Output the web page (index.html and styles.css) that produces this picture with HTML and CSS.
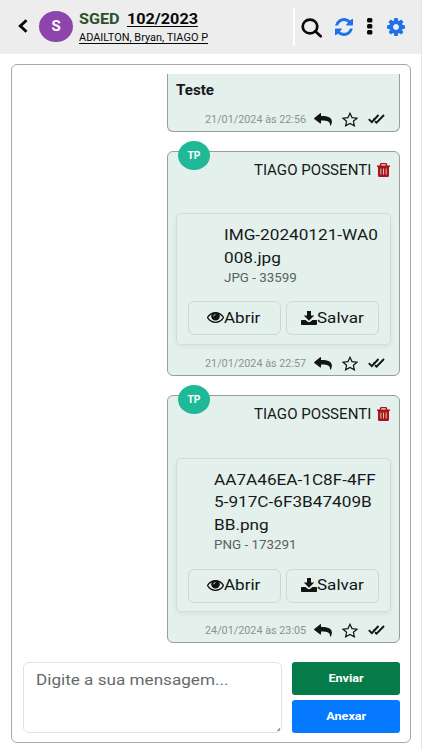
FILE: index.html
```html
<!DOCTYPE html>
<html lang="pt-BR">
<head>
<meta charset="utf-8">
<title>SGED 102/2023</title>
<link rel="stylesheet" href="styles.css">
</head>
<body>
<svg class="defs" aria-hidden="true">
  <symbol id="refresh" viewBox="128 128 1536 1536"><path d="M1639 1056q0 5-1 7-64 268-268 434.500t-478 166.500q-146 0-282.500-55t-243.500-157l-129 129q-19 19-45 19t-45-19-19-45v-448q0-26 19-45t45-19h448q26 0 45 19t19 45-19 45l-137 137q71 66 161 102t187 36q134 0 250-65t186-179q11-17 53-117 8-23 30-23h192q13 0 22.500 9.500t9.500 22.500zm25-800v448q0 26-19 45t-45 19h-448q-26 0-45-19t-19-45 19-45l138-138q-148-137-349-137-134 0-250 65t-186 179q-11 17-53 117-8 23-30 23h-199q-13 0-22.500-9.500t-9.500-22.500v-7q65-268 270-434.500t480-166.500q146 0 284 55.500t245 156.500l130-129q19-19 45-19t45 19 19 45z"/></symbol>
  <symbol id="cog" viewBox="128 128 1536 1536"><path d="M1152 896q0-106-75-181t-181-75-181 75-75 181 75 181 181 75 181-75 75-181zm512-109v222q0 12-8 23t-20 13l-185 28q-19 54-39 91 35 50 107 138 10 12 10 25t-9 23q-27 37-99 108t-94 71q-12 0-26-9l-138-108q-44 23-91 38-16 136-29 186-7 28-36 28h-222q-14 0-24.500-8.500t-11.500-21.500l-28-184q-49-16-90-37l-141 107q-10 9-25 9-14 0-25-11-126-114-165-168-7-10-7-23 0-12 8-23 15-21 51-66.500t54-70.500q-27-50-41-99l-183-27q-13-2-21-12.500t-8-23.500v-222q0-12 8-23t19-13l186-28q14-46 39-92-40-57-107-138-10-12-10-24 0-10 9-23 26-36 98.500-107.500t94.500-71.500q13 0 26 10l138 107q44-23 91-38 16-136 29-186 7-28 36-28h222q14 0 24.500 8.500t11.500 21.500l28 184q49 16 90 37l142-107q9-9 24-9 13 0 25 10 129 119 165 170 7 8 7 22 0 12-8 23-15 21-51 66.500t-54 70.500q26 50 41 98l183 28q13 2 21 12.500t8 23.500z"/></symbol>
  <symbol id="eye" viewBox="0 384 1792 1152"><path d="M1664 960q-152-236-381-353 61 104 61 225 0 185-131.500 316.500t-316.500 131.500-316.500-131.500-131.500-316.500q0-121 61-225-229 117-381 353 133 205 333.500 326.500t434.500 121.500 434.500-121.500 333.500-326.500zm-720-384q0-20-14-34t-34-14q-125 0-214.500 89.500t-89.500 214.500q0 20 14 34t34 14 34-14 14-34q0-86 61-147t147-61q20 0 34-14t14-34zm848 384q0 34-20 69-140 230-376.500 368.500t-499.500 138.500-499.500-139-376.500-368q-20-35-20-69t20-69q140-229 376.500-368t499.500-139 499.500 139 376.500 368q20 35 20 69z"/><circle cx="896" cy="832" r="400"/><path class="glint" d="M700 830Q720 660 890 640"/></symbol>
  <symbol id="download" viewBox="0 0 16 14"><path d="M6 0h4v4.500h3.200L8 9.700 2.800 4.500H6zM.8 9H4.500L6.300 10.600Q8 11.700 9.700 10.600L11.500 9H15.200Q16 9 16 9.800V13.200Q16 14 15.200 14H.8Q0 14 0 13.200V9.800Q0 9 .8 9z"/></symbol>
  <symbol id="reply" viewBox="0 0 18 13"><path d="M.3 4.900 6.200.2Q6.900-.2 7 .7V2.900C13.500 2.800 18 4 17.900 8.700 17.800 10.700 16.900 12.500 16.400 12.700 15.900 12.900 16 12.400 16 11.800 16.100 8.500 13.500 7.500 7 7.600V10Q6.900 10.900 6.200 10.400L.3 5.900Q-.2 5.400.3 4.900z"/></symbol>
  <symbol id="star" viewBox="0 0 16 15"><path class="line" d="M8 1.300 10 5.600 15 6.200 11.400 9.300 12.400 13.800 8 11.500 3.600 13.800 4.600 9.300 1 6.200 6 5.600z"/></symbol>
  <symbol id="checks" viewBox="0 0 17 12"><path class="tick" d="M.8 6.200 3.800 9.200 10.500 2M5.500 5.500 6.300 6.300M7 8.300 8.500 9.600 16 2"/></symbol>
  <symbol id="trash" viewBox="0 0 13 14"><path fill-rule="evenodd" d="M4 0h5q.7 0 1 1l.4 1.500H13v1.600h-1V12.500q0 1.500-1.500 1.500h-8Q1 14 1 12.500V4.100H0V2.500H2.600L3 1Q3.300 0 4 0zM4.500 1.200 4.200 2.500H8.800L8.500 1.200zM3.500 5.500v6h.8V5.500zM6.100 5.500v6h.8V5.500zM8.700 5.500v6h.8V5.500z"/></symbol>
</svg>
<header class="topbar">
  <svg class="back" viewBox="0 0 10 14"><path d="M8.500 1.300 2.300 7 8.500 12.700"/></svg>
  <div class="avatar">S</div>
  <div class="heading">
    <div class="title"><span class="brand">SGED</span><span class="number">102/2023</span></div>
    <div class="members"><span>ADAILTON, Bryan, TIAGO PO</span></div>
  </div>
  <nav class="actions">
    <svg class="search" viewBox="0 0 22 20"><ellipse cx="9" cy="8.500" rx="7.300" ry="6.900"/><path d="M14.300 13.300 19.700 18.200"/></svg>
    <svg class="refresh"><use href="#refresh"/></svg>
    <svg class="dots" viewBox="0 0 6 18"><rect width="5.400" height="4.600" rx="1.500"/><rect y="6" width="5.400" height="4.600" rx="1.500"/><rect y="12" width="5.400" height="4.600" rx="1.500"/></svg>
    <svg class="cog"><use href="#cog"/></svg>
  </nav>
</header>
<main class="chat">
  <section class="messages">
    <article class="message first">
      <p class="text">Teste</p>
      <footer><time>21/01/2024 às 22:56</time><svg class="reply"><use href="#reply"/></svg><svg class="star"><use href="#star"/></svg><svg class="checks"><use href="#checks"/></svg></footer>
    </article>
    <article class="message second">
      <span class="badge">TP</span>
      <div class="author"><span>TIAGO POSSENTI</span><svg class="trash"><use href="#trash"/></svg></div>
      <div class="file jpg">
        <div class="info"><div class="name">IMG-20240121-WA0<br>008.jpg</div><div class="meta">JPG - 33599</div></div>
        <div class="buttons">
          <button><svg class="eye"><use href="#eye"/></svg><span class="open">Abrir</span></button>
          <button><svg class="download"><use href="#download"/></svg><span class="save">Salvar</span></button>
        </div>
      </div>
      <footer><time>21/01/2024 às 22:57</time><svg class="reply"><use href="#reply"/></svg><svg class="star"><use href="#star"/></svg><svg class="checks"><use href="#checks"/></svg></footer>
    </article>
    <article class="message third">
      <span class="badge">TP</span>
      <div class="author"><span>TIAGO POSSENTI</span><svg class="trash"><use href="#trash"/></svg></div>
      <div class="file png">
        <div class="info"><div class="name">AA7A46EA-1C8F-4FF<br>5-917C-6F3B47409B<br>BB.png</div><div class="meta">PNG - 173291</div></div>
        <div class="buttons">
          <button><svg class="eye"><use href="#eye"/></svg><span class="open">Abrir</span></button>
          <button><svg class="download"><use href="#download"/></svg><span class="save">Salvar</span></button>
        </div>
      </div>
      <footer><time>24/01/2024 às 23:05</time><svg class="reply"><use href="#reply"/></svg><svg class="star"><use href="#star"/></svg><svg class="checks"><use href="#checks"/></svg></footer>
    </article>
  </section>
  <form class="composer">
    <div class="field"><span>Digite a sua mensagem...</span></div>
    <div class="send-buttons">
      <button type="button" class="send"><span>Enviar</span></button>
      <button type="button" class="attach"><span>Anexar</span></button>
    </div>
  </form>
</main>
</body>
</html>
```
FILE: styles.css
```css
* { box-sizing: border-box; }
body {
  margin: 0;
  height: 750px;
  overflow: hidden;
  background: #fff;
  border-right: 1px solid #e4e4e4;
  font-family: Roboto, "Liberation Sans", sans-serif;
  color: #161918;
}
svg { display: block; flex: none; fill: currentColor; }
.defs { position: absolute; width: 0; height: 0; }
button { font-family: inherit; padding: 0; margin: 0; }

.topbar {
  display: flex;
  height: 54px;
  background: #ededed;
  color: #080808;
}
.back { width: 10px; height: 14px; margin: 19px 0 0 18px; fill: none; stroke: #080808; stroke-width: 2.900; }
.avatar {
  width: 34px; height: 31px;
  margin: 11px 0 0 11px;
  border-radius: 50%;
  background: #8e44ad;
  color: #fff;
  font-weight: 700; font-size: 15px; line-height: 30px;
  text-align: center;
}
.heading { width: 129px; margin: 11px 0 0 6px; overflow: hidden; }
.title { display: flex; height: 18px; font-weight: 700; font-size: 14.500px; line-height: 18px; }
.title span { display: block; transform-origin: left; transform: scaleX(1.115); }
.brand { width: 48px; color: #2a5129; }
.number { text-decoration: underline; text-decoration-thickness: 1px; text-underline-offset: 2px; }
.members { height: 18px; margin-top: 1px; font-size: 10px; line-height: 16px; white-space: nowrap; overflow: hidden; }
.members span { display: inline-block; transform-origin: left; transform: scaleX(1.095); text-decoration: underline; text-underline-offset: 1.500px; }
.actions {
  display: flex;
  width: 127px; height: 38px;
  margin: 8px 0 0 85px;
  border-left: 2px solid #fff;
}
.search { width: 22px; height: 20px; margin: 10px 0 0 6px; fill: none; stroke: #080808; stroke-width: 2.700; stroke-linecap: round; }
.refresh { width: 20px; height: 18px; margin: 10px 0 0 11px; color: #1c72e8; }
.dots { width: 6px; height: 18px; margin: 10px 0 0 13px; }
.cog { width: 20px; height: 18px; margin: 10px 0 0 13px; color: #1c72e8; }

.chat {
  width: 400px; height: 679px;
  margin: 10px 0 0 11px;
  padding: 9px 11px;
  border: 1px solid #a7a9a9;
  border-radius: 6px;
}
.messages { display: flex; flex-direction: column; align-items: flex-end; height: 588px; }
.message {
  position: relative;
  flex: none;
  display: flex;
  flex-direction: column;
  width: 233px;
  margin-right: -1px;
  padding: 0 8px;
  background: #e4f0ec;
  border: 1px solid #979e9c;
  border-radius: 6px;
}
.first { height: 58px; border-top: 0; border-radius: 0 0 6px 6px; }
.second { height: 225px; margin-top: 19px; }
.third { height: 248px; margin-top: 19px; }
.text { width: 60px; margin: 7px 0 0; font-weight: 700; font-size: 13.800px; line-height: 18px; transform-origin: left; transform: scaleX(1.1); }
.badge {
  position: absolute;
  left: 10px; top: -11px;
  width: 32px; height: 29px;
  border-radius: 50%;
  background: #1fb998;
  color: #fff;
  font-weight: 700; font-size: 10.300px; line-height: 29px;
  text-align: center;
}
.author { display: flex; justify-content: flex-end; gap: 6px; margin: 8px 1px 0 0; font-size: 14.300px; line-height: 20px; }
.author span { transform-origin: right; transform: scaleX(1.055); }
.trash { width: 13px; height: 14px; margin-top: 3px; color: #aa1417; }
.file {
  width: 215px; height: 132px;
  margin-top: 33px;
  border: 1px solid #d1dcd8;
  border-radius: 5px;
  box-shadow: 0 2px 4px #80999026;
}
.file.png { height: 154px; margin-top: 34px; }
.info { padding: 10px 0 0 47px; }
.png .info { padding: 9.500px 0 0 37px; }
.name { font-size: 15.500px; line-height: 22.500px; white-space: nowrap; transform-origin: left; transform: scaleX(1.108); width: 150px; }
.meta { font-size: 12px; line-height: 19px; color: #596361; transform-origin: left; transform: scaleX(1.115); width: 100px; }
.buttons { display: flex; gap: 5px; margin: 13px 0 0 11px; }
.png .buttons { margin-top: 13.500px; }
.buttons button {
  display: flex; align-items: center; justify-content: center;
  width: 93px; height: 34px;
  background: transparent;
  border: 1px solid #ccd8d3;
  border-radius: 6px;
  color: #101413;
  font-size: 15.500px;
}
.buttons button > * { position: relative; top: -.5px; left: -.5px; }
.buttons span { display: block; text-align: left; transform-origin: left; transform: scaleX(1.1); }
.open { width: 37px; }
.save { width: 47px; }
.eye { width: 17px; height: 11px; }
.glint { fill: none; stroke: #e4efeb; stroke-width: 90; }
.download { width: 16px; height: 14px; }
.message footer { display: flex; height: 24px; margin-top: auto; padding-left: 29px; color: #101413; }
time { width: 101px; font-size: 10.200px; line-height: 25px; color: #8a9490; white-space: nowrap; transform-origin: left; transform: scaleX(1.06); }
.reply { width: 18px; height: 13px; margin: 6px 0 0 7.500px; }
.star { width: 16px; height: 15px; margin: 5px 0 0 10.500px; }
.checks { width: 17px; height: 12px; margin: 6px 0 0 9.500px; }
.line { fill: none; stroke: #101413; stroke-width: 1.200; }
.tick { fill: none; stroke: #101413; stroke-width: 1.900; }

.composer { display: flex; gap: 10.500px; }
.field {
  width: 260px; height: 71px;
  padding: 7px 12.500px;
  margin-left: -.5px;
  border: 1px solid #e2e2e2;
  border-radius: 6px;
  color: #656a6c;
  font-size: 15.500px; line-height: 20px;
  background: linear-gradient(135deg, transparent 50%, #999 50%) right 1px bottom 1px / 3px 3px no-repeat;
}
.field span { display: inline-block; white-space: nowrap; transform-origin: left; transform: scaleX(1.105); }
.send-buttons { display: flex; flex-direction: column; gap: 5px; margin-right: -1px; }
.send-buttons button {
  width: 108px; height: 33px;
  border: 0; border-radius: 3px;
  color: #fff; font-weight: 700; font-size: 11.500px;
}
.send-buttons span { display: inline-block; position: relative; top: -.5px; transform: scaleX(1.1); }
.send { background: #047b49; }
.attach { background: #0579ff; }
```
